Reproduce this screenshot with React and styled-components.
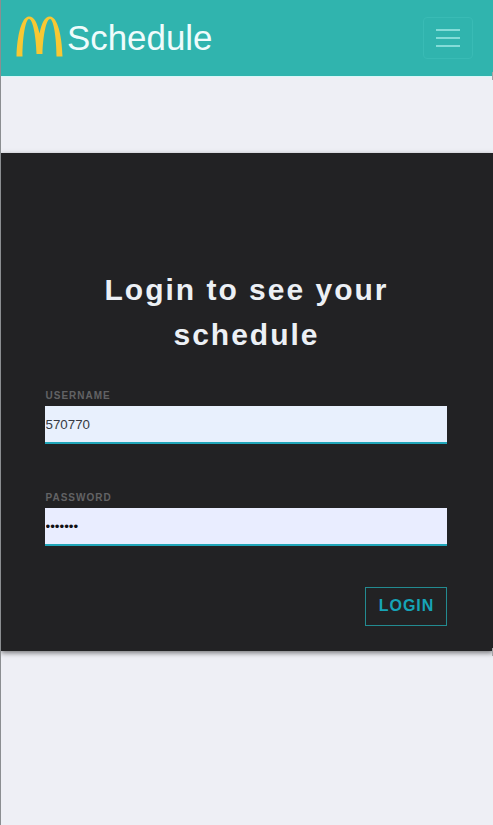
import React from "react";
import styled, { createGlobalStyle } from "styled-components";

const GlobalStyle = createGlobalStyle`
  *, *::before, *::after { box-sizing: border-box; }
  body {
    margin: 0;
    background: #eeeff5;
    font-family: "Liberation Sans", Arial, sans-serif;
  }
`;

const Page = styled.div`
  position: relative;
  height: 825px;
  overflow: hidden;
  border-left: 1px solid #8b8e91;
  background: #eeeff5;
`;

const EdgeMark = styled.span`
  position: absolute;
  top: ${({ $top }) => $top}px;
  right: 0;
  width: 1px;
  height: 8px;
  background: #a2a3a5;
`;

const Navbar = styled.header`
  display: flex;
  align-items: center;
  justify-content: space-between;
  height: 76px;
  padding: 0 20px 0 15px;
  background: #30b4ae;
  box-shadow: 0 1px 0 #d8f8f8;
`;

const Brand = styled.div`
  display: flex;
  align-items: center;
  height: 46px;
  color: #effcfc;
  font-size: 34.9px;
  line-height: 46px;
`;

const Logo = styled.svg`
  width: 47px;
  height: 42px;
  margin: 0 4px 2px 0;
  flex: none;
`;

const Toggler = styled.button`
  display: flex;
  align-items: center;
  justify-content: center;
  width: 50px;
  height: 42px;
  padding: 0;
  border: 1px solid #39bbb5;
  border-radius: 4px;
  background: transparent;
`;

const LoginPanel = styled.main`
  height: 498px;
  margin-top: 77px;
  padding: 114px 46px 0 44px;
  background: #222224;
  box-shadow: 0 2px 5px rgba(0, 0, 0, 0.5);
`;

const Title = styled.h1`
  margin: 0;
  padding-left: 1px;
  color: #ecf0f5;
  font-size: 30px;
  font-weight: 700;
  line-height: 45px;
  letter-spacing: 2px;
  text-align: center;
`;

const Form = styled.form`
  display: flex;
  flex-direction: column;
  margin-top: 32px;
`;

const Field = styled.label`
  display: flex;
  flex-direction: column;
  height: 102px;
`;

const Caption = styled.span`
  height: 17px;
  padding-left: 0.5px;
  color: #626365;
  font-size: 10px;
  font-weight: 700;
  line-height: 13px;
  letter-spacing: 1px;
`;

const Input = styled.input`
  width: 100%;
  height: 38px;
  padding: 1px 0 0 0.5px;
  border: 0;
  border-bottom: 2px solid #20a6b9;
  border-radius: 0;
  outline: 0;
  background: ${({ $tint }) => $tint};
  color: #363a42;
  font: 13.333px "Liberation Sans", Arial, sans-serif;

  &[type="password"] { color: #101014; }
`;

const Submit = styled.button`
  align-self: flex-end;
  width: 82px;
  height: 39px;
  margin-top: -6px;
  padding: 0 0 1px 1px;
  border: 1px solid #238b91;
  border-radius: 0;
  appearance: none;
  background: transparent;
  color: #16a4b7;
  font: 700 16px "Liberation Sans", Arial, sans-serif;
  letter-spacing: 1px;
`;

export default function App() {
  return (
    <>
      <GlobalStyle />
      <Page>
        <Navbar>
          <Brand>
            <Logo viewBox="0 0 47 42" aria-hidden="true">
              <path
                fill="#f8c833"
                d="M.5 40.500C1 20 5.500.5 13 .5c5.500 0 8.500 7 10.500 17C25.500 7.500 28.500.5 34 .5c7.500 0 12 19.500 12.500 40h-6C40.500 22 37.500 3 34 3S27 19 26.500 38h-6C20 19 16.500 3 13 3S6.500 22 6.500 40.500Z"
              />
            </Logo>
            Schedule
          </Brand>
          <Toggler type="button" aria-label="Toggle navigation">
            <svg width="24" height="18" viewBox="0 0 24 18" aria-hidden="true">
              <path d="M0 1h24M0 9h24M0 17h24" stroke="#83dcd8" strokeWidth="2" />
            </svg>
          </Toggler>
        </Navbar>
        <LoginPanel>
          <Title>Login to see your schedule</Title>
          <Form onSubmit={(event) => event.preventDefault()}>
            <Field>
              <Caption>USERNAME</Caption>
              <Input type="text" defaultValue="570770" $tint="#e8f0fd" />
            </Field>
            <Field>
              <Caption>PASSWORD</Caption>
              <Input type="password" defaultValue="1234567" $tint="#e9edff" />
            </Field>
            <Submit type="submit">LOGIN</Submit>
          </Form>
        </LoginPanel>
        <EdgeMark $top={72} />
        <EdgeMark $top={648} />
      </Page>
    </>
  );
}
